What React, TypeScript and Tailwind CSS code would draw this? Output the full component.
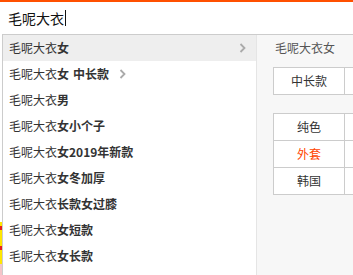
import React from "react";

type Suggestion = {
  prefix: string;
  suffix: string;
  extra?: string;
  arrow?: boolean;
  active?: boolean;
};

const SUGGESTIONS: Suggestion[] = [
  { prefix: "毛呢大衣", suffix: "女", active: true, arrow: true },
  { prefix: "毛呢大衣", suffix: "女", extra: "中长款" },
  { prefix: "毛呢大衣", suffix: "男" },
  { prefix: "毛呢大衣", suffix: "女小个子" },
  { prefix: "毛呢大衣", suffix: "女2019年新款" },
  { prefix: "毛呢大衣", suffix: "女冬加厚" },
  { prefix: "毛呢大衣", suffix: "长款女过膝" },
  { prefix: "毛呢大衣", suffix: "女短款" },
  { prefix: "毛呢大衣", suffix: "女长款" },
];

const Chevron = () => (
  <svg width="7" height="10" viewBox="0 0 7 10" className="shrink-0">
    <polyline
      points="1.5,1 5.5,5 1.5,9"
      fill="none"
      stroke="#aaa"
      strokeWidth="1.8"
    />
  </svg>
);

const Cell = ({ text, red }: { text: string; red?: boolean }) => (
  <div
    className={`w-[71px] h-[26px] shrink-0 flex items-center justify-center bg-white border-r border-[#ccc] ${
      red ? "text-[#ff4400]" : "text-[#333]"
    }`}
  >
    {text}
  </div>
);

export default function App() {
  return (
    <div
      className="w-[353px] h-[275px] overflow-hidden bg-white flex flex-col"
      style={{ fontFamily: '"Noto Sans CJK SC", "Liberation Sans", sans-serif' }}
    >
      <div className="h-[2px] bg-[#ff5000] shrink-0" />
      <div className="h-[32px] shrink-0 flex items-center pl-2 text-[14px] text-[#111]">
        毛呢大衣
        <span className="w-px h-[16px] bg-[#111] ml-px" />
      </div>
      <div className="flex flex-1 min-h-0">
        {/* page behind the popup */}
        <div className="w-[2px] flex flex-col shrink-0">
          <div className="h-[188px] bg-white" />
          <div className="h-[4px] bg-[#ffe600]" />
          <div className="h-[4px] bg-[#e8201a]" />
          <div className="h-[16px] bg-[#ffe600]" />
          <div className="h-[4px] bg-[#e8201a]" />
          <div className="h-[14px] bg-[#ffe600]" />
          <div className="flex-1 bg-[#f4c4c8]" />
        </div>
        <div className="flex flex-1 border-t border-l border-[#ccc] text-[12px]">
          <ul className="w-[253px] shrink-0 bg-white">
            {SUGGESTIONS.map((s, i) => (
              <li
                key={i}
                className={`h-[26px] flex items-center pl-[6px] pr-[10px] text-[#333] ${
                  s.active ? "bg-[#eee]" : ""
                }`}
              >
                <span>{s.prefix}</span>
                <span className="font-bold">{s.suffix}</span>
                {s.extra && (
                  <>
                    <span className="font-bold ml-[4px]">{s.extra}</span>
                    <span className="ml-[10px]">
                      <Chevron />
                    </span>
                  </>
                )}
                {s.arrow && (
                  <span className="ml-auto">
                    <Chevron />
                  </span>
                )}
              </li>
            ))}
          </ul>
          <div className="flex-1 bg-[#f7f7f7] border-l border-[#e5e5e5] pl-[16px] overflow-hidden">
            <div className="h-[26px] flex items-center pl-[2px] text-[#555]">
              毛呢大衣女
            </div>
            <div className="mt-[6px] flex w-[160px] border-t border-b border-l border-[#ccc]">
              <Cell text="中长款" />
              <Cell text="" />
            </div>
            <div className="mt-[18px] w-[160px] border-t border-l border-[#ccc]">
              {[
                ["纯色", ""],
                ["外套", ""],
                ["韩国", ""],
              ].map(([a, b], i) => (
                <div key={i} className="flex border-b border-[#ccc]">
                  <Cell text={a} red={a === "外套"} />
                  <Cell text={b} />
                </div>
              ))}
            </div>
          </div>
        </div>
      </div>
    </div>
  );
}
